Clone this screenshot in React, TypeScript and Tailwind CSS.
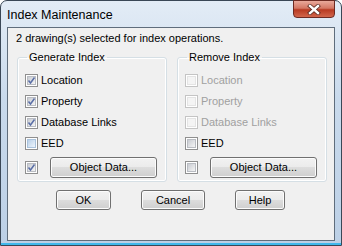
import type { ReactNode } from "react"

const font = { fontFamily: '"Liberation Sans", Arial, sans-serif' }

function CheckBox({ checked, disabled, tint }: { checked?: boolean; disabled?: boolean; tint?: boolean }) {
  return (
    <span
      className={`flex h-[13px] w-[13px] shrink-0 items-center justify-center border bg-white ${
        disabled ? "border-[#c4c4c4]" : "border-[#8f8f8f]"
      }`}
    >
      <span
        className={`relative flex h-[9px] w-[9px] items-center justify-center border ${
          disabled
            ? "border-[#e4e4e4] bg-[#f4f4f4]"
            : tint
              ? "border-[#a9c2dc] bg-gradient-to-br from-[#b9d0e8] to-[#eef4fb]"
              : "border-[#b9bcc2] bg-gradient-to-br from-[#c9ccd2] to-[#f5f5f5]"
        }`}
      >
        {checked && (
          <svg width="11" height="11" viewBox="0 0 11 11" className="absolute -left-[2px] -top-[2px]">
            <path d="M2.5 5.5 L4.5 8 L8.5 2.5" fill="none" stroke="#5a6ea6" strokeWidth="1.5" />
          </svg>
        )}
      </span>
    </span>
  )
}

function Row({ label, checked, disabled, tint }: { label: string; checked?: boolean; disabled?: boolean; tint?: boolean }) {
  return (
    <div className="flex h-[21px] items-center gap-[3px]">
      <CheckBox checked={checked} disabled={disabled} tint={tint} />
      <span className={disabled ? "text-[#a0a0a0]" : "text-black"}>{label}</span>
    </div>
  )
}

function Button({ children, className }: { children: ReactNode; className: string }) {
  return (
    <button
      className={`flex items-center justify-center rounded-[3px] border border-[#707070] bg-[linear-gradient(#f2f2f2_0%,#ebebeb_50%,#dddddd_50%,#cfcfcf_100%)] text-black shadow-[inset_0_0_0_1px_#fcfcfc] ${className}`}
    >
      {children}
    </button>
  )
}

function Group({ title, children }: { title: string; children: ReactNode }) {
  return (
    <fieldset className="h-[131px] w-[150px] rounded-[3px] border border-[#d5dfe5] pl-[7px] pt-[2px] shadow-[inset_0_0_0_1px_#ffffff]">
      <legend className="ml-[2px] px-[2px] leading-[12px]">{title}</legend>
      {children}
    </fieldset>
  )
}

export default function App() {
  return (
    <div
      className="relative flex h-[246px] w-[342px] flex-col rounded-t-[7px] border border-[#3a4756] bg-[linear-gradient(#e3ecf6,#c9daec_40%,#bcd0e6)] text-[11px]"
      style={font}
    >
      <div className="flex h-[26px] items-center pl-[6px] pt-[3px] text-[12.5px] text-black">Index Maintenance</div>

      <div className="absolute right-[6px] top-[-1px] flex h-[18px] w-[42px] items-center justify-center rounded-b-[4px] border border-[#6d2a22] bg-[linear-gradient(#e9a99b,#d47764_45%,#b83a22_55%,#d1664c)]">
        <svg width="14" height="11" viewBox="0 0 14 11">
          <path d="M3 2 L11 9 M11 2 L3 9" stroke="#5a2a20" strokeWidth="4" strokeLinecap="square" />
          <path d="M3 2 L11 9 M11 2 L3 9" stroke="#ffffff" strokeWidth="2.4" strokeLinecap="square" />
        </svg>
      </div>

      <div className="mx-[6px] flex h-[214px] flex-col border border-[#5f6d7c] bg-[#f0f0f0]">
        <div className="pl-[8px] pt-[4px] leading-[13px]">2 drawing(s) selected for index operations.</div>

        <div className="mt-[6px] flex gap-[10px] pl-[9px]">
          <Group title="Generate Index">
            <div className="mt-[5px]">
              <Row label="Location" checked />
              <Row label="Property" checked />
              <Row label="Database Links" checked />
              <Row label="EED" tint />
              <div className="mt-[3px] flex h-[21px] items-center gap-[12px]">
                <CheckBox checked />
                <Button className="h-[21px] w-[107px]">Object Data...</Button>
              </div>
            </div>
          </Group>
          <Group title="Remove Index">
            <div className="mt-[5px]">
              <Row label="Location" disabled />
              <Row label="Property" disabled />
              <Row label="Database Links" disabled />
              <Row label="EED" />
              <div className="mt-[3px] flex h-[21px] items-center gap-[12px]">
                <CheckBox />
                <Button className="h-[21px] w-[107px]">Object Data...</Button>
              </div>
            </div>
          </Group>
        </div>

        <div className="mt-[8px] flex pl-[48px]">
          <Button className="h-[20px] w-[55px]">OK</Button>
          <Button className="ml-[30px] h-[20px] w-[64px]">Cancel</Button>
          <Button className="ml-[30px] h-[20px] w-[50px]">Help</Button>
        </div>
      </div>
      <div className="mt-auto h-[2px] bg-[#3fb8ec]" />
    </div>
  )
}
